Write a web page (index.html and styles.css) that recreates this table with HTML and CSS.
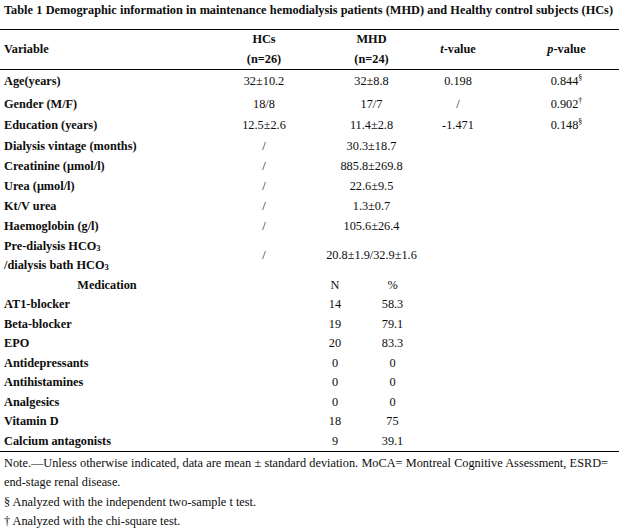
FILE: index.html
```html
<!DOCTYPE html>
<html lang="en">
<head>
<meta charset="utf-8">
<title>Table 1</title>
<link rel="stylesheet" href="styles.css">
</head>
<body>
<div class="page">
  <div class="title">Table 1 Demographic information in maintenance hemodialysis patients (MHD) and Healthy control subjects (HCs)</div>
  <table class="tbl">
    <colgroup>
      <col class="c-var"><col class="c-hc"><col class="c-n"><col class="c-pct"><col class="c-t"><col class="c-p">
    </colgroup>
    <thead>
      <tr class="h1">
        <th rowspan="2" class="var">Variable</th>
        <th>HCs</th>
        <th colspan="2">MHD</th>
        <th rowspan="2"><i>t</i>-value</th>
        <th rowspan="2" class="pcol"><i>p</i>-value</th>
      </tr>
      <tr class="h2">
        <th>(n=26)</th>
        <th colspan="2">(n=24)</th>
      </tr>
    </thead>
    <tbody>
      <tr class="r-age"><td class="var">Age(years)</td><td>32±10.2</td><td colspan="2">32±8.8</td><td>0.198</td><td class="pcol">0.844<sup>§</sup></td></tr>
      <tr class="r-gen"><td class="var">Gender (M/F)</td><td>18/8</td><td colspan="2">17/7</td><td>/</td><td class="pcol">0.902<sup>†</sup></td></tr>
      <tr class="r-edu"><td class="var">Education (years)</td><td>12.5±2.6</td><td colspan="2">11.4±2.8</td><td>-1.471</td><td class="pcol">0.148<sup>§</sup></td></tr>
      <tr class="r20"><td class="var">Dialysis vintage (months)</td><td>/</td><td colspan="2">30.3±18.7</td><td></td><td></td></tr>
      <tr class="r20"><td class="var">Creatinine (μmol/l)</td><td>/</td><td colspan="2">885.8±269.8</td><td></td><td></td></tr>
      <tr class="r20"><td class="var">Urea (μmol/l)</td><td>/</td><td colspan="2">22.6±9.5</td><td></td><td></td></tr>
      <tr class="r20"><td class="var">Kt/V urea</td><td>/</td><td colspan="2">1.3±0.7</td><td></td><td></td></tr>
      <tr class="r20"><td class="var">Haemoglobin (g/l)</td><td>/</td><td colspan="2">105.6±26.4</td><td></td><td></td></tr>
      <tr class="r-pre"><td class="var">Pre-dialysis HCO<sub>3</sub><br>/dialysis bath HCO<sub>3</sub></td><td>/</td><td colspan="2">20.8±1.9/32.9±1.6</td><td></td><td></td></tr>
      <tr class="r-med"><td class="var med">Medication</td><td></td><td>N</td><td>%</td><td></td><td></td></tr>
      <tr class="r19"><td class="var">AT1-blocker</td><td></td><td>14</td><td>58.3</td><td></td><td></td></tr>
      <tr class="r19"><td class="var">Beta-blocker</td><td></td><td>19</td><td>79.1</td><td></td><td></td></tr>
      <tr class="r19"><td class="var">EPO</td><td></td><td>20</td><td>83.3</td><td></td><td></td></tr>
      <tr class="r19"><td class="var">Antidepressants</td><td></td><td>0</td><td>0</td><td></td><td></td></tr>
      <tr class="r19"><td class="var">Antihistamines</td><td></td><td>0</td><td>0</td><td></td><td></td></tr>
      <tr class="r19"><td class="var">Analgesics</td><td></td><td>0</td><td>0</td><td></td><td></td></tr>
      <tr class="r19"><td class="var">Vitamin D</td><td></td><td>18</td><td>75</td><td></td><td></td></tr>
      <tr class="r19 last"><td class="var">Calcium antagonists</td><td></td><td>9</td><td>39.1</td><td></td><td></td></tr>
    </tbody>
  </table>
  <div class="notes">
    <p class="just">Note.—Unless otherwise indicated, data are mean ± standard deviation. MoCA= Montreal Cognitive Assessment, ESRD=</p>
    <p>end-stage renal disease.</p>
    <p>§ Analyzed with the independent two-sample t test.</p>
    <p>† Analyzed with the chi-square test.</p>
  </div>
</div>
</body>
</html>
```

FILE: styles.css
```css
html, body {
  margin: 0;
  padding: 0;
  background: #fff;
}
body {
  font-family: "Liberation Serif", "Times New Roman", serif;
  font-size: 12.3px;
  color: #0d0d0d;
}
.page {
  width: 619px;
}
.title {
  width: 609px;
  font-weight: bold;
  line-height: 20px;
  padding-left: 4px;
  margin-bottom: 9px;
  text-align: justify;
  text-align-last: justify;
}
.tbl {
  width: 619px;
  table-layout: fixed;
  border-collapse: collapse;
  border-top: 1px solid #000;
}
.c-var { width: 214px; }
.c-hc { width: 100px; }
.c-n { width: 42px; }
.c-pct { width: 73px; }
.c-t { width: 58px; }
.c-p { width: 132px; }
.tbl th, .tbl td {
  padding: 0;
  text-align: center;
  vertical-align: middle;
  line-height: 19.5px;
  white-space: nowrap;
}
.tbl th {
  font-weight: bold;
}
.tbl th i {
  font-style: italic;
}
.tbl .var {
  text-align: left;
  padding-left: 4px;
  font-weight: bold;
}
.tbl .var.med {
  text-align: center;
  padding-left: 0;
}
.tbl .pcol {
  padding-left: 27px;
}
.tbl thead tr.h2 th {
  border-bottom: 1px solid #000;
}
.tbl thead th[rowspan] {
  border-bottom: 1px solid #000;
}
.h1 { height: 19.5px; }
.h2 { height: 19.5px; }
.r-age { height: 23.5px; }
.r-gen { height: 22.5px; }
.r-edu { height: 21px; }
.r20 { height: 20px; }
.r-pre { height: 38.5px; }
.r-med { height: 19.5px; }
.r19 { height: 19.25px; }
.tbl tr.last td {
  border-bottom: 1px solid #000;
}
.tbl sup {
  font-size: 8px;
  line-height: 0;
  vertical-align: 5px;
}
.tbl sub {
  font-size: 8.5px;
  line-height: 0;
  vertical-align: -1px;
}
.notes {
  padding-left: 4px;
  margin-top: 1.5px;
}
.notes p {
  margin: 0;
  line-height: 19.5px;
  white-space: nowrap;
}
.notes p.just {
  width: 604px;
  white-space: normal;
  text-align: justify;
  text-align-last: justify;
}
```
